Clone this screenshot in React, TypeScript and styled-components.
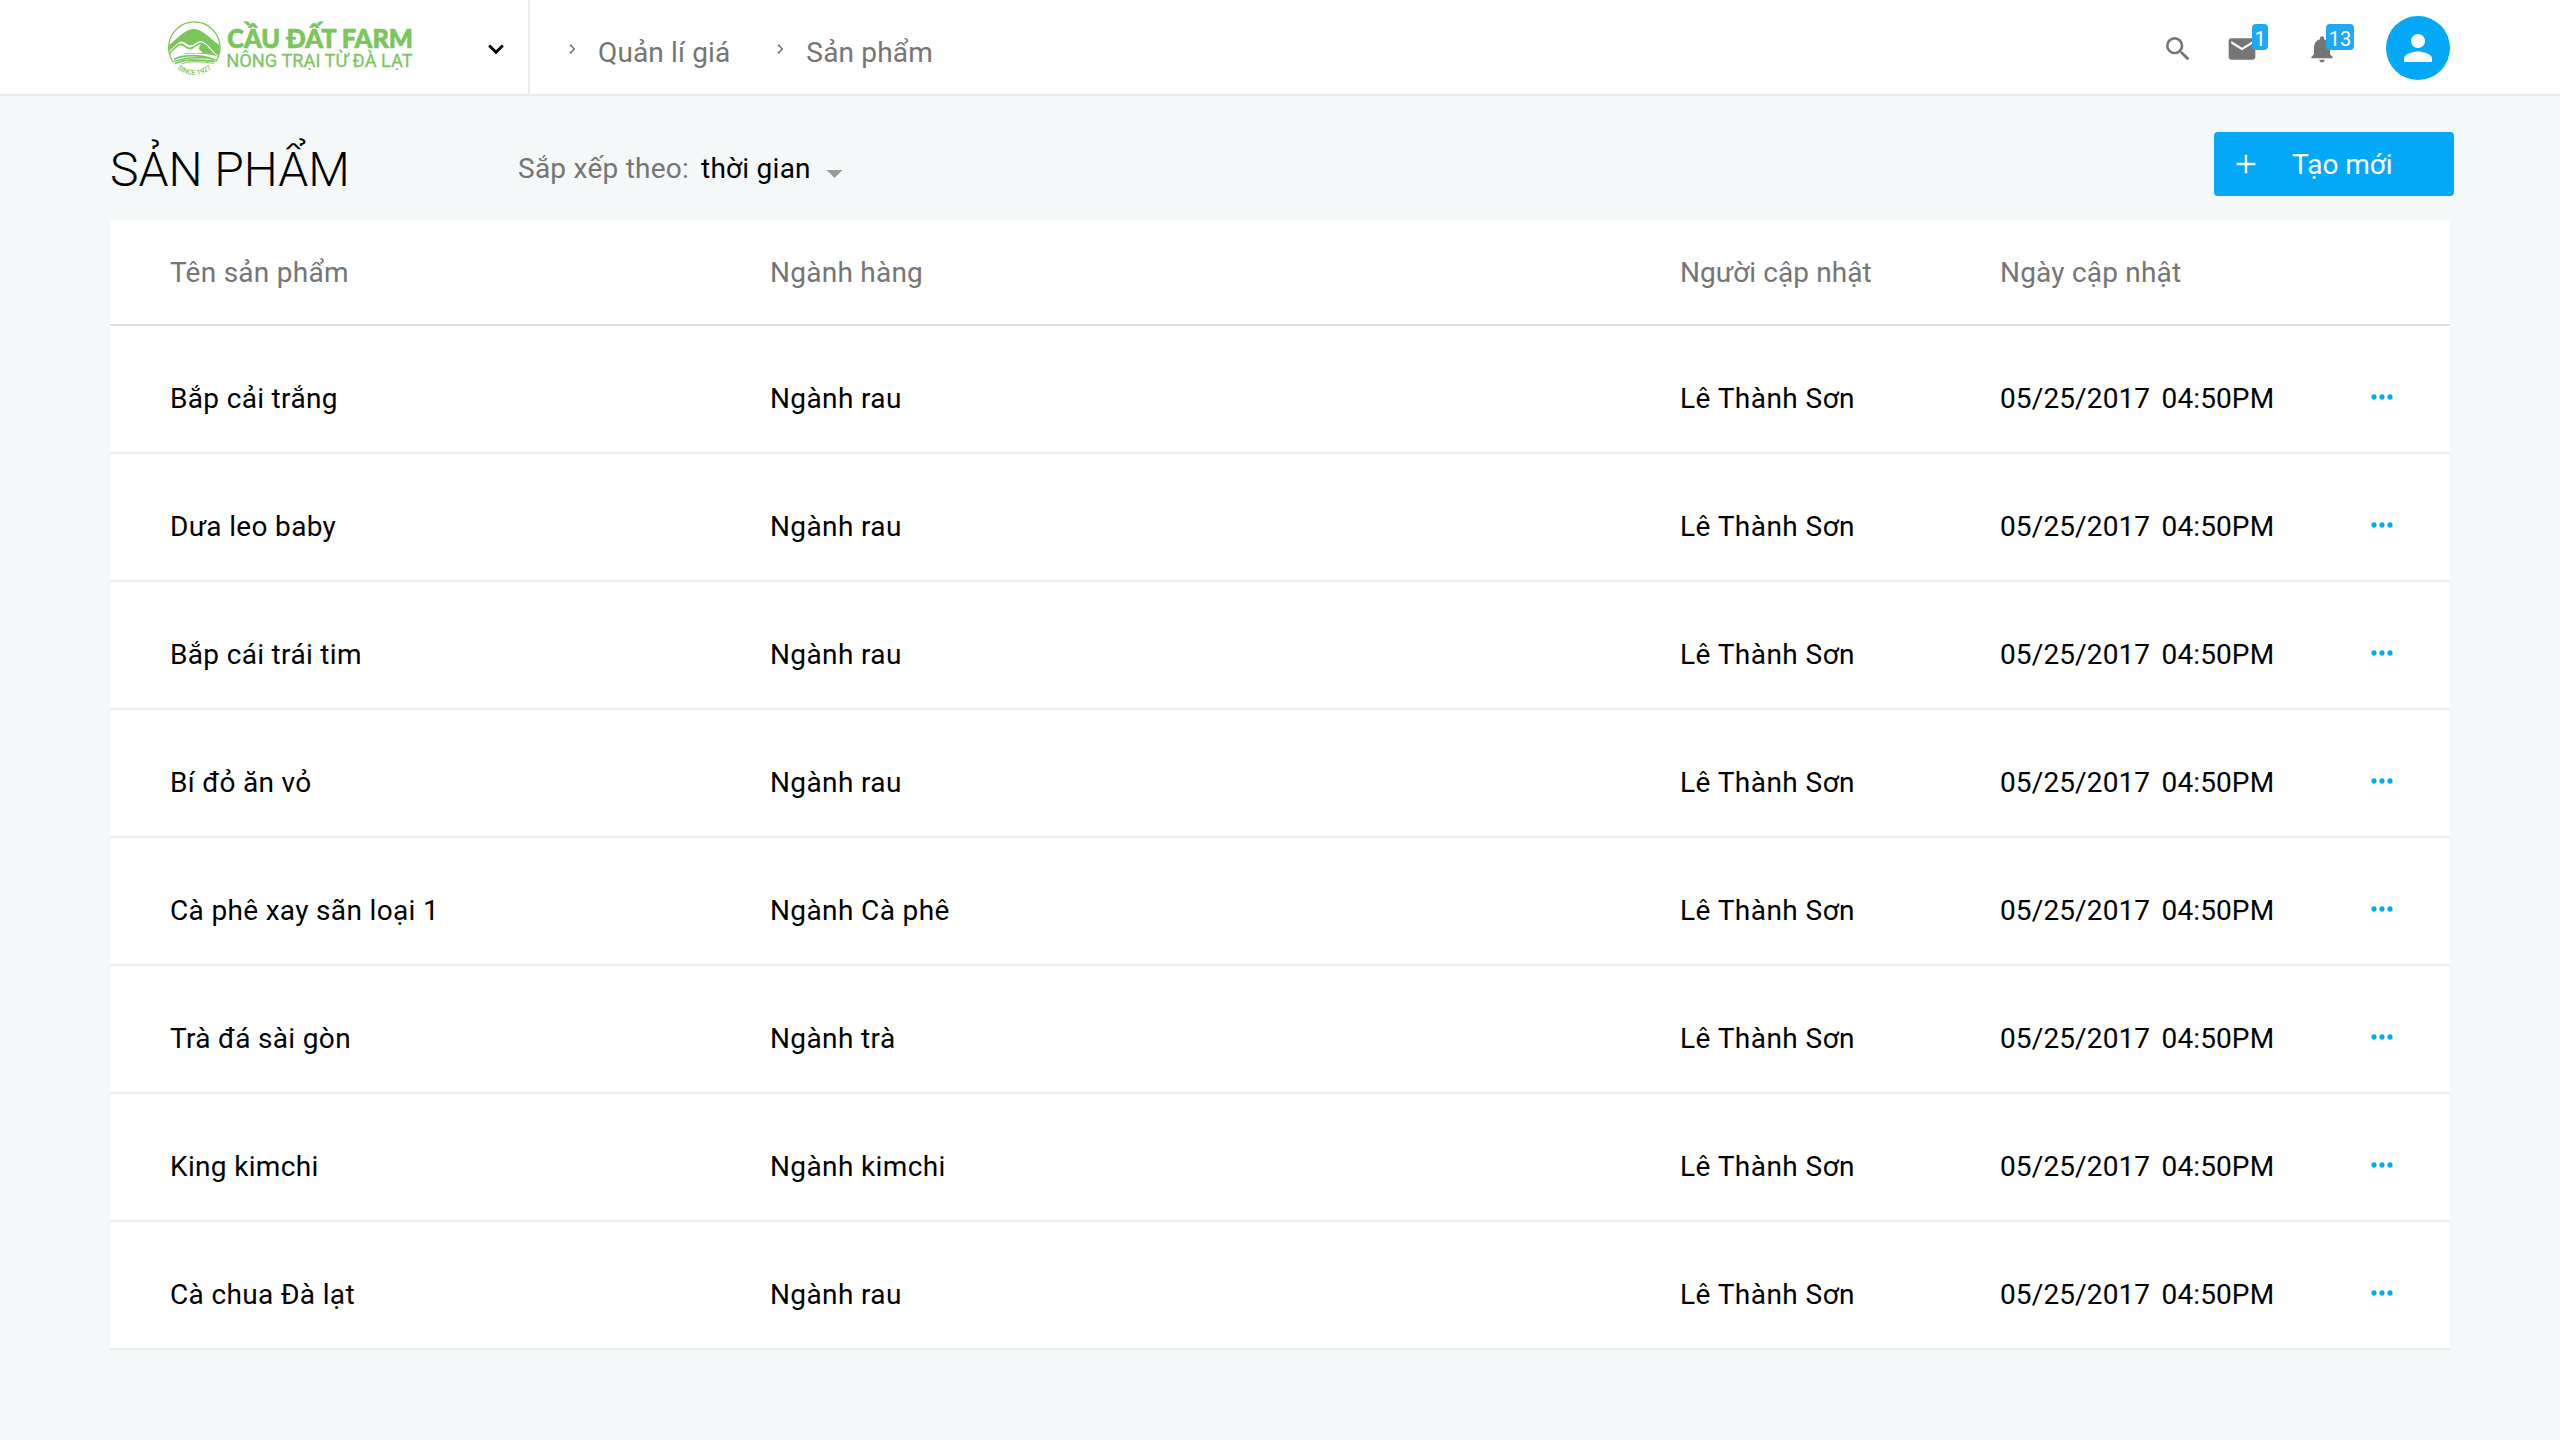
import React from 'react';
import styled, { createGlobalStyle } from 'styled-components';

const color = {
  page: '#f4f8f9',
  surface: '#ffffff',
  text: '#000000',
  muted: '#757575',
  accent: '#03a9f7',
  badge: '#1fa9f3',
  line: '#ececec',
  headLine: '#dedede',
  brand: '#7bc55d',
};

const GlobalStyle = createGlobalStyle`
  *, *::before, *::after { box-sizing: border-box; }
  body {
    margin: 0;
    background: ${color.page};
    color: ${color.text};
    font-family: Roboto, "Noto Sans", sans-serif;
    font-size: 28px;
    line-height: 33px;
  }
`;

const Page = styled.div`
  min-height: 1440px;
  background: ${color.page};
`;

const TopBar = styled.header`
  display: flex;
  height: 96px;
  background: ${color.surface};
  border-bottom: 2px solid ${color.line};
`;

const BrandArea = styled.div`
  display: flex;
  justify-content: space-between;
  width: 530px;
  padding: 0 24px 0 150px;
  border-right: 2px solid ${color.line};
`;

const BrandToggle = styled.button`
  display: flex;
  align-items: center;
  height: 98px;
  padding: 0;
  border: 0;
  background: none;
`;

const Breadcrumbs = styled.nav`
  display: flex;
  flex: 1;
  gap: 47px;
  padding: 36px 0 0 39px;
  color: ${color.muted};
`;

const Crumb = styled.span<{ $tracking: number }>`
  display: flex;
  gap: 22px;
  letter-spacing: ${(p) => p.$tracking}px;
  white-space: nowrap;

  svg {
    margin-top: 7px;
  }
`;

const Actions = styled.div`
  display: flex;
  align-items: flex-start;
  padding: 16px 110px 0 0;
`;

const IconButton = styled.div<{ $gap: number }>`
  position: relative;
  width: 32px;
  height: 32px;
  margin: 17px ${(p) => p.$gap}px 0 0;
  color: ${color.muted};

  svg {
    display: block;
  }
`;

const Badge = styled.span<{ $width: number }>`
  position: absolute;
  top: -9px;
  left: ${(p) => (p.$width > 20 ? 20 : 26)}px;
  width: ${(p) => p.$width}px;
  height: 26px;
  padding-top: 3px;
  border-radius: 4px;
  background: ${color.badge};
  color: #fff;
  font-size: 20px;
  line-height: 24px;
  text-align: center;
`;

const Avatar = styled.div`
  display: flex;
  align-items: center;
  justify-content: center;
  width: 64px;
  height: 64px;
  border-radius: 50%;
  background: ${color.accent};
  color: #fff;
`;

const PageBar = styled.div`
  display: flex;
  align-items: flex-start;
  height: 124px;
  padding: 36px 106px 0 110px;
`;

const Title = styled.h1`
  width: 408px;
  margin: 9px 0 0;
  font-size: 48px;
  font-weight: 300;
  line-height: 57px;
`;

const Sort = styled.div`
  display: flex;
  flex: 1;
  margin-top: 20px;
`;

const SortLabel = styled.span`
  width: 183px;
  color: ${color.muted};
  letter-spacing: 0.25px;
`;

const SortValue = styled.span`
  display: flex;
  gap: 15px;
  letter-spacing: 0.25px;

  svg {
    margin-top: 18px;
  }
`;

const CreateButton = styled.button`
  display: flex;
  gap: 30px;
  width: 240px;
  height: 64px;
  padding: 16px 0 0 16px;
  border: 0;
  border-radius: 4px;
  background: ${color.accent};
  color: #fff;
  font: inherit;
`;

const Table = styled.main`
  width: 2340px;
  margin-left: 110px;
  background: ${color.surface};
`;

const Row = styled.div<{ $head?: boolean }>`
  display: grid;
  grid-template-columns: 600px 910px 320px 366px 32px;
  height: ${(p) => (p.$head ? 106 : 128)}px;
  padding: ${(p) => (p.$head ? 36 : 56)}px 0 0 60px;
  border-bottom: 2px solid ${(p) => (p.$head ? color.headLine : color.line)};
  color: ${(p) => (p.$head ? color.muted : color.text)};
`;

const Cell = styled.span<{ $tracking?: number }>`
  letter-spacing: ${(p) => p.$tracking ?? 0}px;
  white-space: pre;
`;

const DateCell = styled(Cell)`
  word-spacing: -1.4px;
`;

const MoreButton = styled.button`
  width: 32px;
  height: 32px;
  margin-top: -1px;
  padding: 0;
  border: 0;
  background: none;
  color: ${color.accent};

  svg {
    display: block;
  }
`;

const Glyph = ({ d, size = 32 }: { d: string; size?: number }) => (
  <svg width={size} height={size} viewBox="0 0 24 24" fill="currentColor">
    <path d={d} />
  </svg>
);

const glyphs = {
  search:
    'M15.5 14h-.79l-.28-.27A6.47 6.47 0 0 0 16 9.5 6.5 6.5 0 1 0 9.5 16c1.61 0 3.09-.59 4.23-1.57l.27.28v.79l5 4.99L20.49 19l-4.99-5zm-6 0C7.01 14 5 11.99 5 9.5S7.01 5 9.5 5 14 7.01 14 9.5 11.99 14 9.5 14z',
  mail: 'M20 4H4c-1.1 0-1.99.9-1.99 2L2 18c0 1.1.9 2 2 2h16c1.1 0 2-.9 2-2V6c0-1.1-.9-2-2-2zm0 4l-8 5-8-5V6l8 5 8-5v2z',
  bell: 'M12 22c1.1 0 2-.9 2-2h-4c0 1.1.89 2 2 2zm6-6v-5c0-3.07-1.64-5.64-4.5-6.32V4c0-.83-.67-1.5-1.5-1.5s-1.5.67-1.5 1.5v.68C7.63 5.36 6 7.92 6 11v5l-2 2v1h16v-1l-2-2z',
  person:
    'M12 12c2.21 0 4-1.79 4-4s-1.79-4-4-4-4 1.79-4 4 1.79 4 4 4zm0 2c-2.67 0-8 1.34-8 4v2h16v-2c0-2.66-5.33-4-8-4z',
  add: 'M19 12.9h-6.1V19h-1.8v-6.1H5v-1.8h6.1V5h1.8v6.1H19v1.8z',
  more: 'M6 10c-1.1 0-2 .9-2 2s.9 2 2 2 2-.9 2-2-.9-2-2-2zm12 0c-1.1 0-2 .9-2 2s.9 2 2 2 2-.9 2-2-.9-2-2-2zm-6 0c-1.1 0-2 .9-2 2s.9 2 2 2 2-.9 2-2-.9-2-2-2z',
};

const CrumbArrow = () => (
  <svg width="7" height="12" viewBox="0 0 7 12" fill="none" stroke={color.muted} strokeWidth="1.6">
    <path d="M1 1.6 L5.2 6 L1 10.4" />
  </svg>
);

const Logo = () => (
  <svg width="270" height="94" viewBox="0 0 810 282" fill={color.brand}>
    <defs>
      <clipPath id="seal">
        <circle cx="133" cy="144" r="76" />
      </clipPath>
      <path id="sealText" d="M 70 194 A 80 80 0 0 0 196 194" />
    </defs>
    <path d="M 68 184 A 77 77 0 1 1 198 184" fill="none" stroke={color.brand} strokeWidth="4" />
    <g clipPath="url(#seal)">
      <path d="M54 137 C76 124 100 88 131 87 C162 88 184 122 212 137 L208 168 C190 162 172 124 152 123 C139 123 132 137 120 136 C108 134 101 121 90 126 C78 132 70 144 56 154 Z" />
      <path
        d="M58 160 C72 148 82 132 92 133 C102 134 108 145 119 145 C134 144 141 129 155 129"
        fill="none"
        stroke={color.brand}
        strokeWidth="5"
      />
      <path d="M98 162 C118 158 134 131 156 128 C172 131 184 158 208 171 C170 158 132 160 98 162 Z" />
      <path d="M104 160 C124 154 140 133 153 132 C142 145 148 152 160 158 Z" fill={color.surface} />
    </g>
    <g fill="none" stroke={color.brand} strokeWidth="4">
      <path d="M72 178 C98 164 150 162 196 180" strokeWidth="5" />
      <path d="M68 186 C100 172 140 172 174 174" />
      <path d="M74 191 C102 178 134 178 196 184" strokeWidth="5" />
      <path d="M94 192 C116 183 150 184 192 190" strokeWidth="3" />
    </g>
    <text fontFamily="Roboto, sans-serif" fontSize="21" fontWeight="500">
      <textPath href="#sealText" startOffset="50%" textAnchor="middle">
        SINCE 1927
      </textPath>
    </text>
    <text
      x="232"
      y="144"
      fontFamily="Lato, sans-serif"
      fontSize="79"
      fontWeight="900"
      textLength="557"
      lengthAdjust="spacingAndGlyphs"
      stroke={color.brand}
      strokeWidth="2"
    >
      CẦU ĐẤT FARM
    </text>
    <text
      x="229"
      y="200"
      fontFamily="Roboto, sans-serif"
      fontSize="56"
      textLength="559"
      lengthAdjust="spacingAndGlyphs"
      stroke={color.brand}
      strokeWidth="0.8"
    >
      NÔNG TRẠI TỪ ĐÀ LẠT
    </text>
  </svg>
);

const products: { name: string; category: string }[] = [
  { name: 'Bắp cải trắng', category: 'Ngành rau' },
  { name: 'Dưa leo baby', category: 'Ngành rau' },
  { name: 'Bắp cái trái tim', category: 'Ngành rau' },
  { name: 'Bí đỏ ăn vỏ', category: 'Ngành rau' },
  { name: 'Cà phê xay sãn loại 1', category: 'Ngành Cà phê' },
  { name: 'Trà đá sài gòn', category: 'Ngành trà' },
  { name: 'King kimchi', category: 'Ngành kimchi' },
  { name: 'Cà chua Đà lạt', category: 'Ngành rau' },
];

export default function App() {
  return (
    <Page>
      <GlobalStyle />
      <TopBar>
        <BrandArea>
          <Logo />
          <BrandToggle aria-label="Menu">
            <svg width="16" height="11" viewBox="0 0 16 11" fill="none" stroke="#000" strokeWidth="2.8">
              <path d="M1.2 1.4 L8 8.2 L14.8 1.4" />
            </svg>
          </BrandToggle>
        </BrandArea>
        <Breadcrumbs>
          <Crumb $tracking={0.14}>
            <CrumbArrow />
            Quản lí giá
          </Crumb>
          <Crumb $tracking={0.18}>
            <CrumbArrow />
            Sản phẩm
          </Crumb>
        </Breadcrumbs>
        <Actions>
          <IconButton $gap={32}>
            <Glyph d={glyphs.search} />
          </IconButton>
          <IconButton $gap={48}>
            <Glyph d={glyphs.mail} />
            <Badge $width={16}>1</Badge>
          </IconButton>
          <IconButton $gap={48}>
            <Glyph d={glyphs.bell} />
            <Badge $width={28}>13</Badge>
          </IconButton>
          <Avatar>
            <Glyph d={glyphs.person} size={42} />
          </Avatar>
        </Actions>
      </TopBar>
      <PageBar>
        <Title>SẢN PHẨM</Title>
        <Sort>
          <SortLabel>Sắp xếp theo:</SortLabel>
          <SortValue>
            thời gian
            <svg width="17" height="8" viewBox="0 0 17 8" fill="#9a9a9a">
              <path d="M0.5 0 H16.5 L8.5 8 Z" />
            </svg>
          </SortValue>
        </Sort>
        <CreateButton>
          <Glyph d={glyphs.add} />
          Tạo mới
        </CreateButton>
      </PageBar>
      <Table>
        <Row $head>
          <Cell $tracking={0.26}>Tên sản phẩm</Cell>
          <Cell $tracking={0.25}>Ngành hàng</Cell>
          <Cell $tracking={0.08}>Người cập nhật</Cell>
          <Cell $tracking={0.2}>Ngày cập nhật</Cell>
        </Row>
        {products.map((product) => (
          <Row key={product.name}>
            <Cell $tracking={0.33}>{product.name}</Cell>
            <Cell $tracking={0.38}>{product.category}</Cell>
            <Cell $tracking={0.45}>Lê Thành Sơn</Cell>
            <DateCell $tracking={0.12}>{'05/25/2017  04:50PM'}</DateCell>
            <MoreButton aria-label="Thao tác">
              <Glyph d={glyphs.more} />
            </MoreButton>
          </Row>
        ))}
      </Table>
    </Page>
  );
}
